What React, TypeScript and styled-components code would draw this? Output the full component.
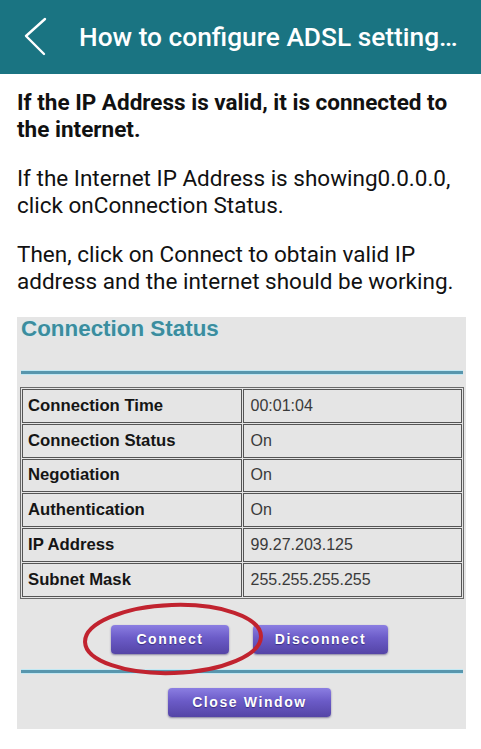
import styled, { createGlobalStyle } from 'styled-components';

const GlobalStyle = createGlobalStyle`
  body {
    margin: 0;
    background: #ffffff;
    font-family: Roboto, 'Noto Sans', sans-serif;
  }
`;

const Page = styled.div`
  width: 481px;
  min-height: 749px;
  background: #ffffff;
`;

const AppBar = styled.header`
  height: 74px;
  background: #1a7482;
  display: flex;
  align-items: center;
  padding-left: 23px;
`;

const BackButton = styled.button`
  border: none;
  background: none;
  padding: 0;
  width: 24px;
  height: 40px;
  display: flex;
  align-items: center;
  cursor: pointer;
`;

const Title = styled.h1`
  margin: 0 0 0 32px;
  font-size: 26.3px;
  font-weight: 500;
  color: #ffffff;
  white-space: nowrap;
  overflow: hidden;
  text-overflow: ellipsis;
  width: 395px;
`;

const Content = styled.main`
  padding: 15px 14px 0 17px;
`;

const Paragraph = styled.p<{ $bold?: boolean }>`
  margin: 0 0 22px;
  font-size: 22.5px;
  line-height: 27px;
  color: #111111;
  font-weight: ${(p) => (p.$bold ? 700 : 400)};
`;

const Shot = styled.figure`
  margin: 20px 0 0;
  width: 449px;
  background: #e5e5e5;
  padding: 0 0 12px;
  font-family: 'Liberation Sans', Arial, sans-serif;
`;

const ShotTitle = styled.h2`
  margin: 0;
  padding-left: 4px;
  font-size: 22.4px;
  line-height: 24px;
  font-weight: 700;
  color: #3b8d9e;
  text-shadow: 0 0 2px #c8eef6;
`;

const Rule = styled.div<{ $top: number }>`
  margin: ${(p) => p.$top}px 3px 0 4px;
  height: 3px;
  background: #5896ad;
  box-shadow: 0 -1px 0 #c2e8f3, 0 1px 0 #c2e8f3;
`;

const StatusTable = styled.table`
  margin: 13px 2px 0 3px;
  width: 444px;
  border: 1px solid #6a6a6a;
  border-collapse: separate;
  border-spacing: 1px;
  table-layout: fixed;
`;

const Cell = styled.td<{ $label?: boolean }>`
  height: 33.8px;
  box-sizing: border-box;
  border: 1px solid #555555;
  padding: 0 6px 0 ${(p) => (p.$label ? 5 : 7)}px;
  font-size: ${(p) => (p.$label ? 16.7 : 16)}px;
  font-weight: ${(p) => (p.$label ? 700 : 400)};
  color: ${(p) => (p.$label ? '#151515' : '#3a3a3a')};
  width: 50%;
`;

const ButtonRow = styled.div<{ $top: number }>`
  position: relative;
  display: flex;
  justify-content: center;
  gap: 24px;
  padding-left: 16px;
  margin-top: ${(p) => p.$top}px;
`;

const RouterButton = styled.button<{ $w: number }>`
  width: ${(p) => p.$w}px;
  height: 29px;
  border: none;
  border-radius: 4px;
  background: linear-gradient(#8b7ee2 0%, #6b5bc7 45%, #5444a6 100%);
  box-shadow: 0 1px 2px rgba(40, 30, 90, 0.5);
  color: #ffffff;
  font-family: 'Liberation Sans', Arial, sans-serif;
  font-size: 14px;
  font-weight: 700;
  letter-spacing: 1.6px;
  text-shadow: 0 1px 1px #3a2d80;
  cursor: pointer;
`;

const Highlight = styled.svg`
  position: absolute;
  left: 65px;
  top: -24px;
  pointer-events: none;
`;

const rows: [string, string][] = [
  ['Connection Time', '00:01:04'],
  ['Connection Status', 'On'],
  ['Negotiation', 'On'],
  ['Authentication', 'On'],
  ['IP Address', '99.27.203.125'],
  ['Subnet Mask', '255.255.255.255'],
];

export default function App() {
  return (
    <Page>
      <GlobalStyle />
      <AppBar>
        <BackButton aria-label="Back">
          <svg width="24" height="40" viewBox="0 0 24 40">
            <polyline
              points="22,2 3,19 21,37"
              fill="none"
              stroke="#ffffff"
              strokeWidth="2.4"
              strokeLinecap="round"
              strokeLinejoin="round"
            />
          </svg>
        </BackButton>
        <Title>How to configure ADSL setting…</Title>
      </AppBar>
      <Content>
        <Paragraph $bold>
          If the IP Address is valid, it is connected to the internet.
        </Paragraph>
        <Paragraph>
          If the Internet IP Address is showing0.0.0.0, click onConnection
          Status.
        </Paragraph>
        <Paragraph>
          Then, click on Connect to obtain valid IP address and the internet
          should be working.
        </Paragraph>
        <Shot>
          <ShotTitle>Connection Status</ShotTitle>
          <Rule $top={30} />
          <StatusTable>
            <tbody>
              {rows.map(([label, value]) => (
                <tr key={label}>
                  <Cell $label>{label}</Cell>
                  <Cell>{value}</Cell>
                </tr>
              ))}
            </tbody>
          </StatusTable>
          <ButtonRow $top={26}>
            <RouterButton $w={118}>Connect</RouterButton>
            <RouterButton $w={135}>Disconnect</RouterButton>
            <Highlight width="182" height="76" viewBox="0 0 182 76">
              <ellipse
                cx="91"
                cy="38"
                rx="88"
                ry="34"
                fill="none"
                stroke="#c1232f"
                strokeWidth="4"
                transform="rotate(-2 91 38)"
              />
            </Highlight>
          </ButtonRow>
          <Rule $top={16} />
          <ButtonRow $top={15}>
            <RouterButton $w={163}>Close Window</RouterButton>
          </ButtonRow>
        </Shot>
      </Content>
    </Page>
  );
}
